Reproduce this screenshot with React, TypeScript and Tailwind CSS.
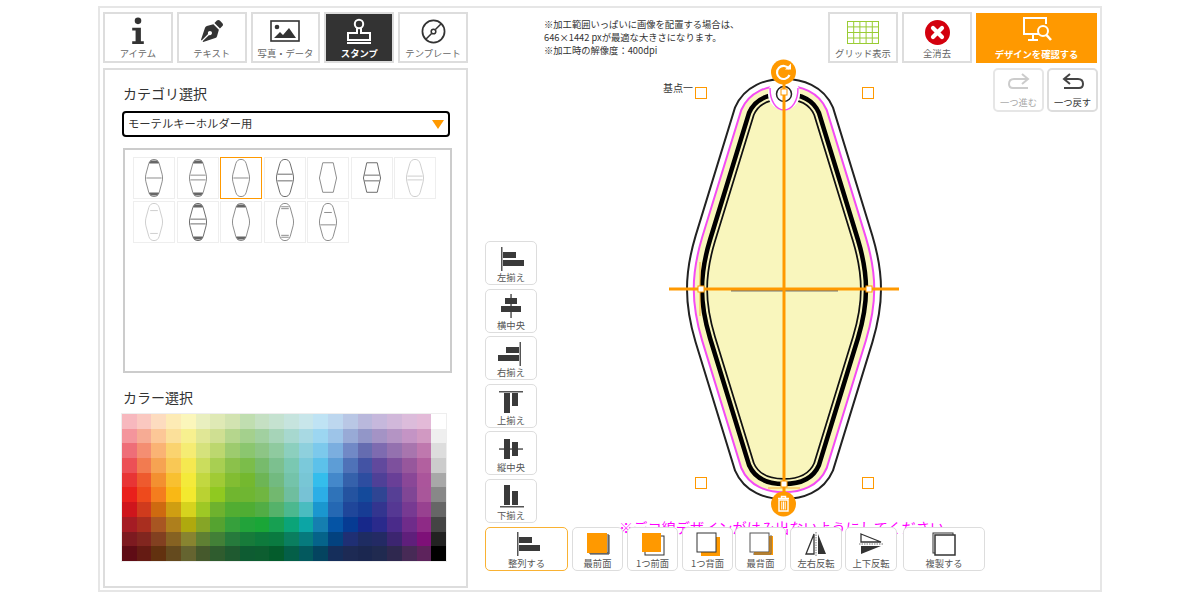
import { FaPenNib } from 'react-icons/fa'

const FONT = 'font-["Noto_Sans_CJK_JP","Noto_Sans",sans-serif]'

const PALETTE = [
  'f7b8be fac8c0 fddcbf fdebb5 fbf6bb e9efbf dfe9b5 d2e3b1 c0deb0 c5e0c3 c5e2d0 c6e4de c8e6ea bfe3f4 bdd7ef b9c7e5 b9b8dc c6b8dc d1b8da dcbcdb e3bad8 ffffff',
  'f4959c f6ab94 fcc797 fbe09a f7f08f e0e796 cfdf92 b5d68d a4d08d a1d0a0 a6d4b8 a7d8cf a8d9e3 9cd6f1 9dc4e8 98aad6 9296c8 a493c5 b494c4 c494c5 d199c2 efefef',
  'ee6e78 f48e72 fab374 fad36f f5ec73 d5e27c bcd76f 9dcb6e 8bc66f 8dc585 8fca9f 8ccfbe 8ed0dd 7cc9ec 7baedf 7189c6 656cb0 7e6bb0 9471af a875ae bf78ae dddddd',
  'ec5056 f27b50 f6a352 f9c855 f5e850 cbdd5d a8cf52 8bc14b 7bbd4a 77bb6c 7cc08f 7ac8b2 7bc9da 5cc1ea 5d9dd6 4f72b8 4353a4 61499d 7d509d 97579c b2609f cccccc',
  'e83535 ee5a2e f39030 f8c030 f4ea3a c2d840 a0cb35 82bd32 74b82f 6db555 72ba80 74c3aa 78c6d5 34bdec 4488ca 3561ab 2d4da0 4f4097 693f97 8a4797 ab559b a8a8a8',
  'e9201c ee4a1c f47d1e f9b815 f3e92f bad232 90c920 70b62f 6fb632 70b641 72b86f 6fbe9f 77c2d5 2caee6 2f73b9 2453a0 144a9b 2f4593 563f95 804695 a9569a 888888',
  'cf151c d03b1d ce6a10 cf9e12 d6d31e 9ec825 6eb22e 52ad32 4fad33 52ad45 55b26a 4cb88f 4abcc0 1a97cf 2568b3 1f469a 173c94 33358f 553893 773a92 984190 666666',
  'a51c24 a92e1f a85622 ae7f1c afa90e 86a526 55a330 36a03c 22a33a 1aa637 17a052 0ba478 0ca5a5 157fb0 0554a5 063b93 17288a 2a2a8c 4a2b8a 6f2c8a 8e2a86 444444',
  '7d1a20 81261f 824020 866222 888430 5f8033 428037 267a3c 177b3a 0e7a3c 0a7a40 0a7e5f 067a7d 05638a 03427f 1f2f74 1e2c62 232a64 3c2570 5f1f7b 7e1078 222222',
  '5f0c15 651b13 62310f 644a1e 656430 45592c 2f5c2e 1f5a30 0e5c32 0d5e30 045c2c 045f48 03595e 044460 152e5b 1d2a54 1b2750 202a50 2f284f 472a56 5d235c 000000'
].flatMap((row) => row.split(' '))

// centre line of the thick black ring; the other rings are strokes around it
const TAG =
  'M784 94 C769 94 755 99 749 113 L710 240 C704 260 702 275 702 289 C702 303 704 318 710 338 L749 465 C755 479 769 484 784 484 C799 484 813 479 819 465 L858 338 C864 318 866 303 866 289 C866 275 864 260 858 240 L819 113 C813 99 799 94 784 94 Z'

const MINI =
  'M21 1.5 C18 1.5 16.5 3 15.5 6 L12.5 17 C11.9 19.5 11.9 22.5 12.5 25 L15.5 36 C16.5 39 18 40.5 21 40.5 C24 40.5 25.5 39 26.5 36 L29.5 25 C30.1 22.5 30.1 19.5 29.5 17 L26.5 6 C25.5 3 24 1.5 21 1.5 Z'
const MINI_FLAT = 'M15.5 5 L26.5 5 L30 21 L26.5 36 L15.5 36 L12 21 Z'

type Thumb = {
  flat?: boolean
  caps?: boolean
  lines?: number[]
  light?: boolean
  dark?: boolean
  selected?: boolean
  short?: number[]
}

const THUMBS: Thumb[] = [
  { caps: true, lines: [21] },
  { caps: true, lines: [18, 23] },
  { lines: [21], selected: true },
  { dark: true, lines: [17, 24] },
  { flat: true },
  { flat: true, dark: true, lines: [18, 24] },
  { light: true, lines: [19, 23] },
  { light: true, short: [9, 33] },
  { caps: true, lines: [18, 23], dark: true },
  { caps: true },
  { short: [5, 7, 35, 37] },
  { short: [11], lines: [24] }
]

function MiniTag({ t }: { t: Thumb }) {
  const color = t.light ? '#ccc' : t.dark ? '#666' : '#888'
  return (
    <div className={`h-[42px] w-[42px] border ${t.selected ? 'border-[#f90]' : 'border-[#eee]'}`}>
      <svg viewBox="0 0 42 42" className="h-full w-full" fill="none">
        <path d={t.flat ? MINI_FLAT : MINI} stroke={color} strokeWidth="1" />
        {t.caps && <path d="M17 3.5 L25 3.5 M16 5 L26 5 M16 37 L26 37 M17 38.5 L25 38.5" stroke="#666" strokeWidth="1.5" />}
        {t.lines?.map((y) => <path key={y} d={`M13 ${y} L29 ${y}`} stroke={color} strokeWidth="1" />)}
        {t.short?.map((y) => <path key={y} d={`M17 ${y} L25 ${y}`} stroke={color} strokeWidth="1" />)}
      </svg>
    </div>
  )
}

function TabButton({ label, active, children }: { label: string; active?: boolean; children: React.ReactNode }) {
  return (
    <div
      className={`flex h-[51px] w-[70px] flex-col items-center justify-between border-2 pb-[1px] pt-[2px] ${
        active ? 'border-[#ddd] bg-[#333] font-bold text-white' : 'border-[#ddd] bg-white text-[#666]'
      }`}
    >
      <div className="flex h-[30px] items-center justify-center">{children}</div>
      <span className="text-[9.3px] leading-[13px] whitespace-nowrap">{label}</span>
    </div>
  )
}

function ToolButton({ label, className, children }: { label: string; className: string; children: React.ReactNode }) {
  return (
    <div className={`flex h-[44px] flex-none flex-col items-center rounded-[5px] border bg-white pt-[4px] text-[#555] ${className}`}>
      <div className="flex h-[25px] items-center justify-center">{children}</div>
      <span className="text-[9.3px] leading-[12px] whitespace-nowrap">{label}</span>
    </div>
  )
}

function AlignIcon({ kind }: { kind: string }) {
  const dark = '#3a3a3a'
  const line = '#555'
  const shapes: Record<string, React.ReactNode> = {
    left: (<><rect x="3" y="1" width="1.5" height="24" fill={line} /><rect x="5" y="6" width="13" height="6" fill={dark} /><rect x="5" y="14" width="21" height="6" fill={dark} /></>),
    center: (<><rect x="12.3" y="1" width="1.5" height="24" fill={line} /><rect x="7" y="5" width="12" height="6" fill={dark} /><rect x="3" y="13" width="20" height="6" fill={dark} /></>),
    right: (<><rect x="21.5" y="1" width="1.5" height="24" fill={line} /><rect x="8" y="6" width="13" height="6" fill={dark} /><rect x="0" y="14" width="21" height="6" fill={dark} /></>),
    top: (<><rect x="1" y="3" width="24" height="1.5" fill={line} /><rect x="6" y="5" width="6" height="20" fill={dark} /><rect x="14" y="5" width="6" height="13" fill={dark} /></>),
    middle: (<><rect x="1" y="12.3" width="24" height="1.5" fill={line} /><rect x="6" y="3" width="6" height="20" fill={dark} /><rect x="14" y="6" width="6" height="14" fill={dark} /></>),
    bottom: (<><rect x="2" y="23" width="24" height="1.5" fill={line} /><rect x="6" y="2" width="6" height="20" fill={dark} /><rect x="14" y="8" width="6" height="14" fill={dark} /></>)
  }
  return <svg viewBox="0 0 26 26" className="h-[26px] w-[26px]">{shapes[kind]}</svg>
}

const ORG = '#f90'
const BLK = '#333'

function OrderIcon({ kind }: { kind: string }) {
  return (
    <svg viewBox="0 0 24 24" className="h-[24px] w-[24px]">
      {kind === 'front' && (<><path d="M4 22 H23 V3" fill="none" stroke={BLK} strokeWidth="1" /><path d="M3 21 H22 V2" fill="none" stroke={BLK} strokeWidth="1" /><rect x="1" y="1" width="20" height="20" fill={ORG} /></>)}
      {kind === 'forward' && (<><rect x="4" y="4" width="19" height="19" fill="#fff" stroke={BLK} strokeWidth="1" /><rect x="1" y="1" width="19" height="19" fill={ORG} /></>)}
      {kind === 'backward' && (<><rect x="5" y="5" width="19" height="19" fill={ORG} /><rect x="1" y="1" width="19" height="19" fill="#fff" stroke={BLK} strokeWidth="1" /></>)}
      {kind === 'back' && (<><rect x="5" y="4" width="19" height="19" fill={ORG} /><path d="M4 22 H22 V3" fill="none" stroke="#666" strokeWidth="1" /><rect x="1" y="1" width="19" height="19" fill="#fff" stroke="#555" strokeWidth="1" /></>)}
      {kind === 'copy' && (<><rect x="1" y="1" width="20" height="20" fill="#fff" stroke={BLK} strokeWidth="1" /><rect x="3" y="3" width="20" height="20" fill="#fff" stroke={BLK} strokeWidth="1.5" /></>)}
      {kind === 'fliph' && (<><path d="M2 22 L10 2 V22 Z" fill="#fff" stroke={BLK} strokeWidth="1.3" /><path d="M14 2 L22 22 H14 Z" fill={BLK} /><path d="M12 0 V24" stroke="#777" strokeWidth="1" strokeDasharray="1.5 1" /></>)}
      {kind === 'flipv' && (<><path d="M2 2 L22 10 H2 Z" fill="#fff" stroke={BLK} strokeWidth="1.3" /><path d="M2 14 H22 L2 22 Z" fill={BLK} /><path d="M0 12 H24" stroke="#777" strokeWidth="1" strokeDasharray="1.5 1" /></>)}
    </svg>
  )
}

const SIDE_TOOLS = [
  ['left', '左揃え'],
  ['center', '横中央'],
  ['right', '右揃え'],
  ['top', '上揃え'],
  ['middle', '縦中央'],
  ['bottom', '下揃え']
]

function Stage() {
  return (
    <svg viewBox="472 12 628 578" className="absolute inset-0 h-[578px] w-[628px]" fill="none">
      <defs>
        <clipPath id="tag-inside">
          <path d={TAG} />
        </clipPath>
      </defs>
      <path d={TAG} stroke="#222" strokeWidth="32" />
      <path d={TAG} stroke="#fff" strokeWidth="28" />
      <path d={TAG} stroke="#f44cf4" strokeWidth="18.5" />
      <path d={TAG} fill="#f9f6bd" stroke="#f9f6bd" strokeWidth="14.5" />
      <g clipPath="url(#tag-inside)">
        <path d={TAG} stroke="#111" strokeWidth="12" />
        <path d={TAG} stroke="#f9f6bd" strokeWidth="8.5" />
      </g>
      <path d={TAG} stroke="#000" strokeWidth="4.5" />
      <path d="M700 262 V316 M768 488 H800" stroke="#f9b233" strokeWidth="1" />
      <path d="M731 290.5 H838" stroke="#777" strokeWidth="2" />

      {/* key hole */}
      <circle cx="784" cy="94" r="16" fill="#fff" />
      <path d="M770 88 C770 101 776 110 784 110 C792 110 798 101 798 88" stroke="#f44cf4" strokeWidth="1.5" />
      <circle cx="784" cy="94" r="7.5" stroke="#222" strokeWidth="1.5" />

      {/* selection guides */}
      <path d="M784 72 V500" stroke={ORG} strokeWidth="3" />
      <path d="M669 289 H899" stroke={ORG} strokeWidth="3" />
      {[
        [701, 93],
        [868, 93],
        [701, 483],
        [868, 483]
      ].map(([x, y]) => (
        <rect key={`${x}-${y}`} x={x - 5.5} y={y - 5.5} width="11" height="11" fill="#fff" stroke={ORG} strokeWidth="1" />
      ))}
      {[
        [784, 92],
        [701, 289],
        [869, 289],
        [784, 484]
      ].map(([x, y]) => (
        <rect key={`h${x}-${y}`} x={x - 3} y={y - 3} width="6" height="6" fill="#fff" stroke={ORG} strokeWidth="1" />
      ))}

      {/* rotate handle */}
      <circle cx="783.5" cy="72" r="12.5" fill={ORG} />
      <path d="M789 69 A6.5 6.5 0 1 0 789.5 75" stroke="#fff" strokeWidth="2.2" />
      <path d="M785 69.5 H791 V63.5 Z" fill="#fff" />

      {/* trash handle */}
      <circle cx="783.5" cy="504" r="12.5" fill={ORG} />
      <path d="M778 498.5 H789 M781.5 498 V496.5 H785.5 V498" stroke="#fff" strokeWidth="1.4" />
      <path d="M779 500 V511 H788 V500 Z" stroke="#fff" strokeWidth="1.4" />
      <path d="M781.8 501.5 V509.5 M783.5 501.5 V509.5 M785.2 501.5 V509.5" stroke="#fff" strokeWidth="1" />
    </svg>
  )
}

export default function App() {
  return (
    <div className={`h-[600px] w-[1200px] overflow-hidden bg-white ${FONT}`}>
      <div className="ml-[98px] flex h-[592px] w-[1004px] pt-[6px]">
        <div className="flex h-[586px] w-[1004px] border-2 border-[#e6e6e6] pl-[3px] pt-[4px]">
          {/* left column */}
          <div className="flex w-[365px] flex-none flex-col gap-[5px]">
            <div className="flex gap-[4px]">
              <TabButton label="アイテム">
                <svg viewBox="0 0 20 30" className="h-[29px] w-[20px]" fill="#333">
                  <circle cx="10" cy="4" r="3.4" />
                  <path d="M4 11 H13 V25 H16 V28 H4 V25 H7.5 V14 H4 Z" />
                </svg>
              </TabButton>
              <TabButton label="テキスト">
                <FaPenNib className="h-[22px] w-[22px] text-[#333]" />
              </TabButton>
              <TabButton label="写真・データ">
                <svg viewBox="0 0 30 22" className="h-[22px] w-[30px]">
                  <rect x="1" y="1" width="28" height="20" fill="#fff" stroke="#333" strokeWidth="1.6" />
                  <circle cx="7" cy="7" r="2.3" fill="#333" />
                  <path d="M4 18 L10 12 L13 15 L19 8 L26 18 Z" fill="#333" />
                </svg>
              </TabButton>
              <TabButton label="スタンプ" active>
                <svg viewBox="0 0 28 26" className="h-[26px] w-[28px]" fill="none" stroke="#fff" strokeWidth="2">
                  <circle cx="14" cy="6" r="4.2" />
                  <path d="M12 10 V15 H3 V22 H25 V15 H16 V10" />
                  <path d="M2 25 H26" />
                </svg>
              </TabButton>
              <TabButton label="テンプレート">
                <svg viewBox="0 0 26 26" className="h-[25px] w-[25px]" fill="none" stroke="#333">
                  <circle cx="13" cy="13" r="11.5" strokeWidth="1.8" />
                  <circle cx="13" cy="13" r="2.4" strokeWidth="1.6" />
                  <path d="M5 21 L11 15 M15 11 L21 5" strokeWidth="1.6" />
                </svg>
              </TabButton>
            </div>

            <div className="h-[520px] border-2 border-[#ddd] px-[17px] pt-[14px]">
              <div className="ml-[1px] text-[14px] leading-[18px] text-[#333]">カテゴリ選択</div>
              <div className="relative mt-[9px] flex h-[26px] w-[328px] items-center rounded-[4px] border-2 border-black pb-[2px] pl-[4px] text-[11.3px] text-[#333]">
                モーテルキーホルダー用
                <div className="absolute right-[4px] top-[7px] h-0 w-0 border-x-[6px] border-t-[9px] border-x-transparent border-t-[#f90]" />
              </div>
              <div className="ml-[1px] mt-[11px] h-[225px] w-[329px] border-2 border-[#ccc] pl-[8px] pt-[7px]">
                <div className="flex w-[312px] flex-wrap gap-[1.5px]">
                  {THUMBS.map((t, i) => (
                    <MiniTag key={i} t={t} />
                  ))}
                </div>
              </div>
              <div className="ml-[1px] mt-[15px] text-[14px] leading-[18px] text-[#333]">カラー選択</div>
              <div className="mt-[8px] grid h-[147px] w-[324px] grid-cols-[repeat(22,1fr)] grid-rows-[repeat(10,1fr)] outline outline-[#eee]">
                {PALETTE.map((c, i) => (
                  <div key={i} style={{ backgroundColor: `#${c}` }} />
                ))}
              </div>
            </div>
          </div>

          {/* right column: design area */}
          <div className="relative ml-[4px] flex-1">
            <Stage />
            <div className="absolute left-[191px] top-[70px] text-[10px] leading-[12px] text-[#333]">基点一</div>
            <div className="absolute left-[147px] top-[505px] text-[14.2px] leading-[20px] whitespace-nowrap text-[#f0f]">
              ※デコ線デザインがはみ出ないようにしてください
            </div>

            <div className="relative flex">
              <div className="ml-[72px] mt-[6px] text-[9.3px] leading-[13px] text-[#333]">
                <div>※加工範囲いっぱいに画像を配置する場合は、</div>
                <div>646×1442 pxが最適な大きさになります。</div>
                <div>※加工時の解像度：400dpi</div>
              </div>
              <div className="ml-auto mr-[3px] flex gap-[4px]">
                <TabButton label="グリッド表示">
                  <svg viewBox="0 0 32 23" className="mt-[2px] h-[23px] w-[32px]" fill="none" stroke="#9c3" strokeWidth="1">
                    <rect x="0.5" y="0.5" width="31" height="22" />
                    <path d="M6.7 0 V23 M12.9 0 V23 M19.1 0 V23 M25.3 0 V23 M0 5.9 H32 M0 11.5 H32 M0 17 H32" />
                  </svg>
                </TabButton>
                <TabButton label="全消去">
                  <svg viewBox="0 0 25 25" className="mt-[2px] h-[25px] w-[25px]">
                    <circle cx="12.5" cy="12.5" r="12.5" fill="#d3000e" />
                    <path d="M8 8 L17 17 M17 8 L8 17" stroke="#fff" strokeWidth="4.2" strokeLinecap="round" />
                  </svg>
                </TabButton>
                <div className="mt-[1px] flex h-[50px] w-[121px] flex-col items-center justify-between bg-[#f90] pb-[2px] pt-[3px] text-white">
                  <svg viewBox="0 0 30 26" className="h-[26px] w-[30px]" fill="none" stroke="#fff" strokeWidth="2">
                    <path d="M17 18 H2 V2 H24 V8" />
                    <path d="M11 18 V23 M6 24 H16" />
                    <circle cx="21" cy="15" r="5" />
                    <path d="M24.5 19 L29 24" strokeWidth="2.6" />
                  </svg>
                  <span className="text-[9.3px] font-bold leading-[13px]">デザインを確認する</span>
                </div>
              </div>
            </div>

            <div className="relative mr-[2px] mt-[5px] flex justify-end gap-[3px]">
              <div className="flex h-[44px] w-[51px] flex-col items-center rounded-[5px] border-2 border-[#e6e6e6] pt-[2px] text-[#aaa]">
                <svg viewBox="0 0 24 24" className="h-[24px] w-[24px]" fill="none" stroke="#ccc" strokeWidth="2">
                  <path d="M20 7 H7 C3 7 2 9 2 12 C2 15 3 16 6 16 H21" />
                  <path d="M15 2 L21 7 L15 12" />
                </svg>
                <span className="text-[9.3px] leading-[12px]">一つ進む</span>
              </div>
              <div className="flex h-[44px] w-[51px] flex-col items-center rounded-[5px] border-2 border-[#ddd] pt-[2px] text-[#333]">
                <svg viewBox="0 0 24 24" className="h-[24px] w-[24px]" fill="none" stroke="#444" strokeWidth="2">
                  <path d="M4 7 H17 C21 7 22 9 22 12 C22 15 21 16 18 16 H3" />
                  <path d="M9 2 L3 7 L9 12" />
                </svg>
                <span className="text-[9.3px] leading-[12px]">一つ戻す</span>
              </div>
            </div>

            <div className="relative ml-[13px] mt-[129px] flex w-[52px] flex-col gap-[3.5px]">
              {SIDE_TOOLS.map(([kind, label]) => (
                <ToolButton key={kind} label={label} className="w-[52px] border-[#ddd]">
                  <AlignIcon kind={kind} />
                </ToolButton>
              ))}
            </div>

            <div className="relative ml-[13px] mt-[4px] flex">
              <ToolButton label="整列する" className="w-[83px] border-[#f9b233]">
                <AlignIcon kind="left" />
              </ToolButton>
              <ToolButton label="最前面" className="ml-[4px] w-[51px] border-[#ddd]">
                <OrderIcon kind="front" />
              </ToolButton>
              <ToolButton label="1つ前面" className="ml-[4px] w-[51px] border-[#ddd]">
                <OrderIcon kind="forward" />
              </ToolButton>
              <ToolButton label="1つ背面" className="ml-[4px] w-[51px] border-[#ddd]">
                <OrderIcon kind="backward" />
              </ToolButton>
              <ToolButton label="最背面" className="ml-[2px] w-[51px] border-[#ddd]">
                <OrderIcon kind="back" />
              </ToolButton>
              <ToolButton label="左右反転" className="ml-[4px] w-[52px] border-[#ddd]">
                <OrderIcon kind="fliph" />
              </ToolButton>
              <ToolButton label="上下反転" className="ml-[3px] w-[52px] border-[#ddd]">
                <OrderIcon kind="flipv" />
              </ToolButton>
              <ToolButton label="複製する" className="ml-[6px] w-[82px] border-[#ddd]">
                <OrderIcon kind="copy" />
              </ToolButton>
            </div>
          </div>
        </div>
      </div>
    </div>
  )
}
